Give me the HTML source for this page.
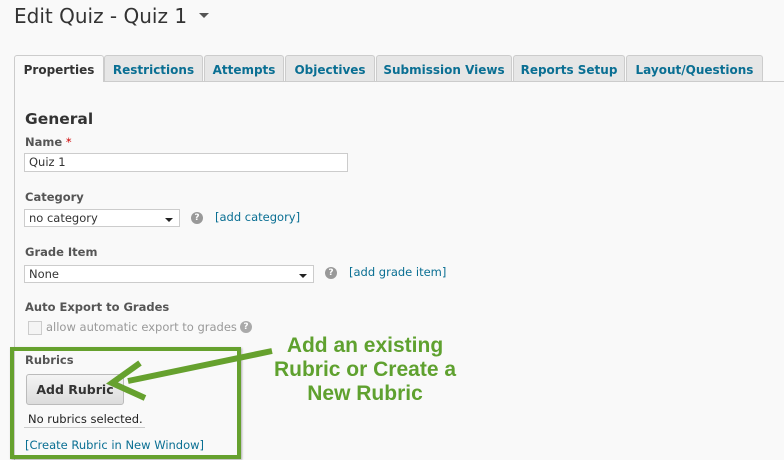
<!DOCTYPE html>
<html><head><style>
body{margin:0;width:784px;height:460px;background:#f9f9f9;font-family:"DejaVu Sans",Verdana,sans-serif;position:relative;overflow:hidden;color:#333}
.a{position:absolute;white-space:nowrap}
.tab{position:absolute;top:55px;height:26px;background:#e6e6e6;border:1px solid #ccc;border-bottom:none;border-radius:3px 3px 0 0;box-sizing:border-box;font-size:12px;font-weight:bold;color:#0a6f93;text-align:center;line-height:28px}
.lbl{position:absolute;font-size:11.5px;font-weight:bold;color:#555}
.inp{position:absolute;background:#fff;border:1px solid #ccc;box-sizing:border-box;font-size:11.5px;padding-left:4px;line-height:16px}
.dd::after{content:"";position:absolute;right:6px;top:8px;border:4px solid transparent;border-top:4px solid #222;border-bottom:none}
.lnk{position:absolute;font-size:11.5px;color:#0a6f93}
.q{position:absolute;width:12px;height:12px;border-radius:50%;background:#999;color:#fff;font-size:9px;font-weight:bold;text-align:center;line-height:12px}
.g{position:absolute;font-family:"Liberation Sans",Arial,sans-serif;font-weight:bold;font-size:21px;color:#5fa12f;text-align:center;width:240px;left:245px}
</style></head><body>
<div class="a" style="left:14px;top:4px;font-size:20px;color:#333">Edit Quiz - Quiz 1</div>
<div class="a" style="left:199px;top:13px;border:5px solid transparent;border-top:5px solid #555;border-bottom:none"></div>
<div class="a" style="left:14px;top:81px;width:1px;height:379px;background:#ccc"></div>
<div class="a" style="left:103px;top:81px;width:681px;height:1px;background:#ccc"></div>
<div class="tab" style="left:14px;width:90px;background:#f9f9f9;color:#333">Properties</div>
<div class="tab" style="left:104px;width:99px">Restrictions</div>
<div class="tab" style="left:204px;width:80px">Attempts</div>
<div class="tab" style="left:285px;width:90px">Objectives</div>
<div class="tab" style="left:376px;width:136px">Submission Views</div>
<div class="tab" style="left:513px;width:112px">Reports Setup</div>
<div class="tab" style="left:626px;width:137px">Layout/Questions</div>
<div class="a" style="left:25px;top:110px;font-size:15.5px;font-weight:bold;color:#333">General</div>
<div class="lbl" style="left:25px;top:135px">Name<span style="color:#c00;font-weight:normal"> *</span></div>
<div class="inp" style="left:24px;top:153px;width:324px;height:19px">Quiz 1</div>
<div class="lbl" style="left:25px;top:190px">Category</div>
<div class="inp dd" style="left:24px;top:209px;width:156px;height:18px">no category</div>
<div class="q" style="left:191px;top:212px">?</div>
<div class="lnk" style="left:215px;top:210px">[add category]</div>
<div class="lbl" style="left:25px;top:245px">Grade Item</div>
<div class="inp dd" style="left:24px;top:265px;width:290px;height:18px">None</div>
<div class="q" style="left:325px;top:267px">?</div>
<div class="lnk" style="left:349px;top:265px">[add grade item]</div>
<div class="lbl" style="left:25px;top:300px">Auto Export to Grades</div>
<div class="a" style="left:28px;top:321px;width:12px;height:12px;border:1px solid #ccc;background:#f4f4f4"></div>
<div class="a" style="left:46px;top:320px;font-size:11.5px;color:#999">allow automatic export to grades</div>
<div class="q" style="left:240px;top:321px;background:#aaa">?</div>
<div class="lbl" style="left:25px;top:353px">Rubrics</div>
<div class="a" style="left:26px;top:374px;width:98px;height:31px;border:1px solid #bbb;border-radius:3px;background:linear-gradient(#f4f4f4,#dcdcdc);box-sizing:border-box;font-size:12.5px;font-weight:bold;text-align:center;line-height:29px;color:#333">Add Rubric</div>
<div class="a" style="left:28px;top:412px;font-size:11.5px;color:#222">No rubrics selected.</div>
<div class="a" style="left:24px;top:427px;width:121px;height:1px;background:#ccc"></div>
<div class="lnk" style="left:25px;top:438px">[Create Rubric in New Window]</div>
<div class="a" style="left:10px;top:347px;width:231px;height:112px;border:4px solid #66a12e;box-sizing:border-box;box-shadow:1px 1px 2px rgba(0,0,0,.3)"></div>
<svg class="a" style="left:0;top:0" width="784" height="460"><line x1="272" y1="351" x2="128" y2="381" stroke="#66a12e" stroke-width="6"/><polyline points="140,363 112,383 145,398" fill="none" stroke="#66a12e" stroke-width="6" stroke-linejoin="miter"/></svg>
<div class="g" style="top:334px">Add an existing</div>
<div class="g" style="top:358px">Rubric or Create a</div>
<div class="g" style="top:382px">New Rubric</div>
</body></html>
